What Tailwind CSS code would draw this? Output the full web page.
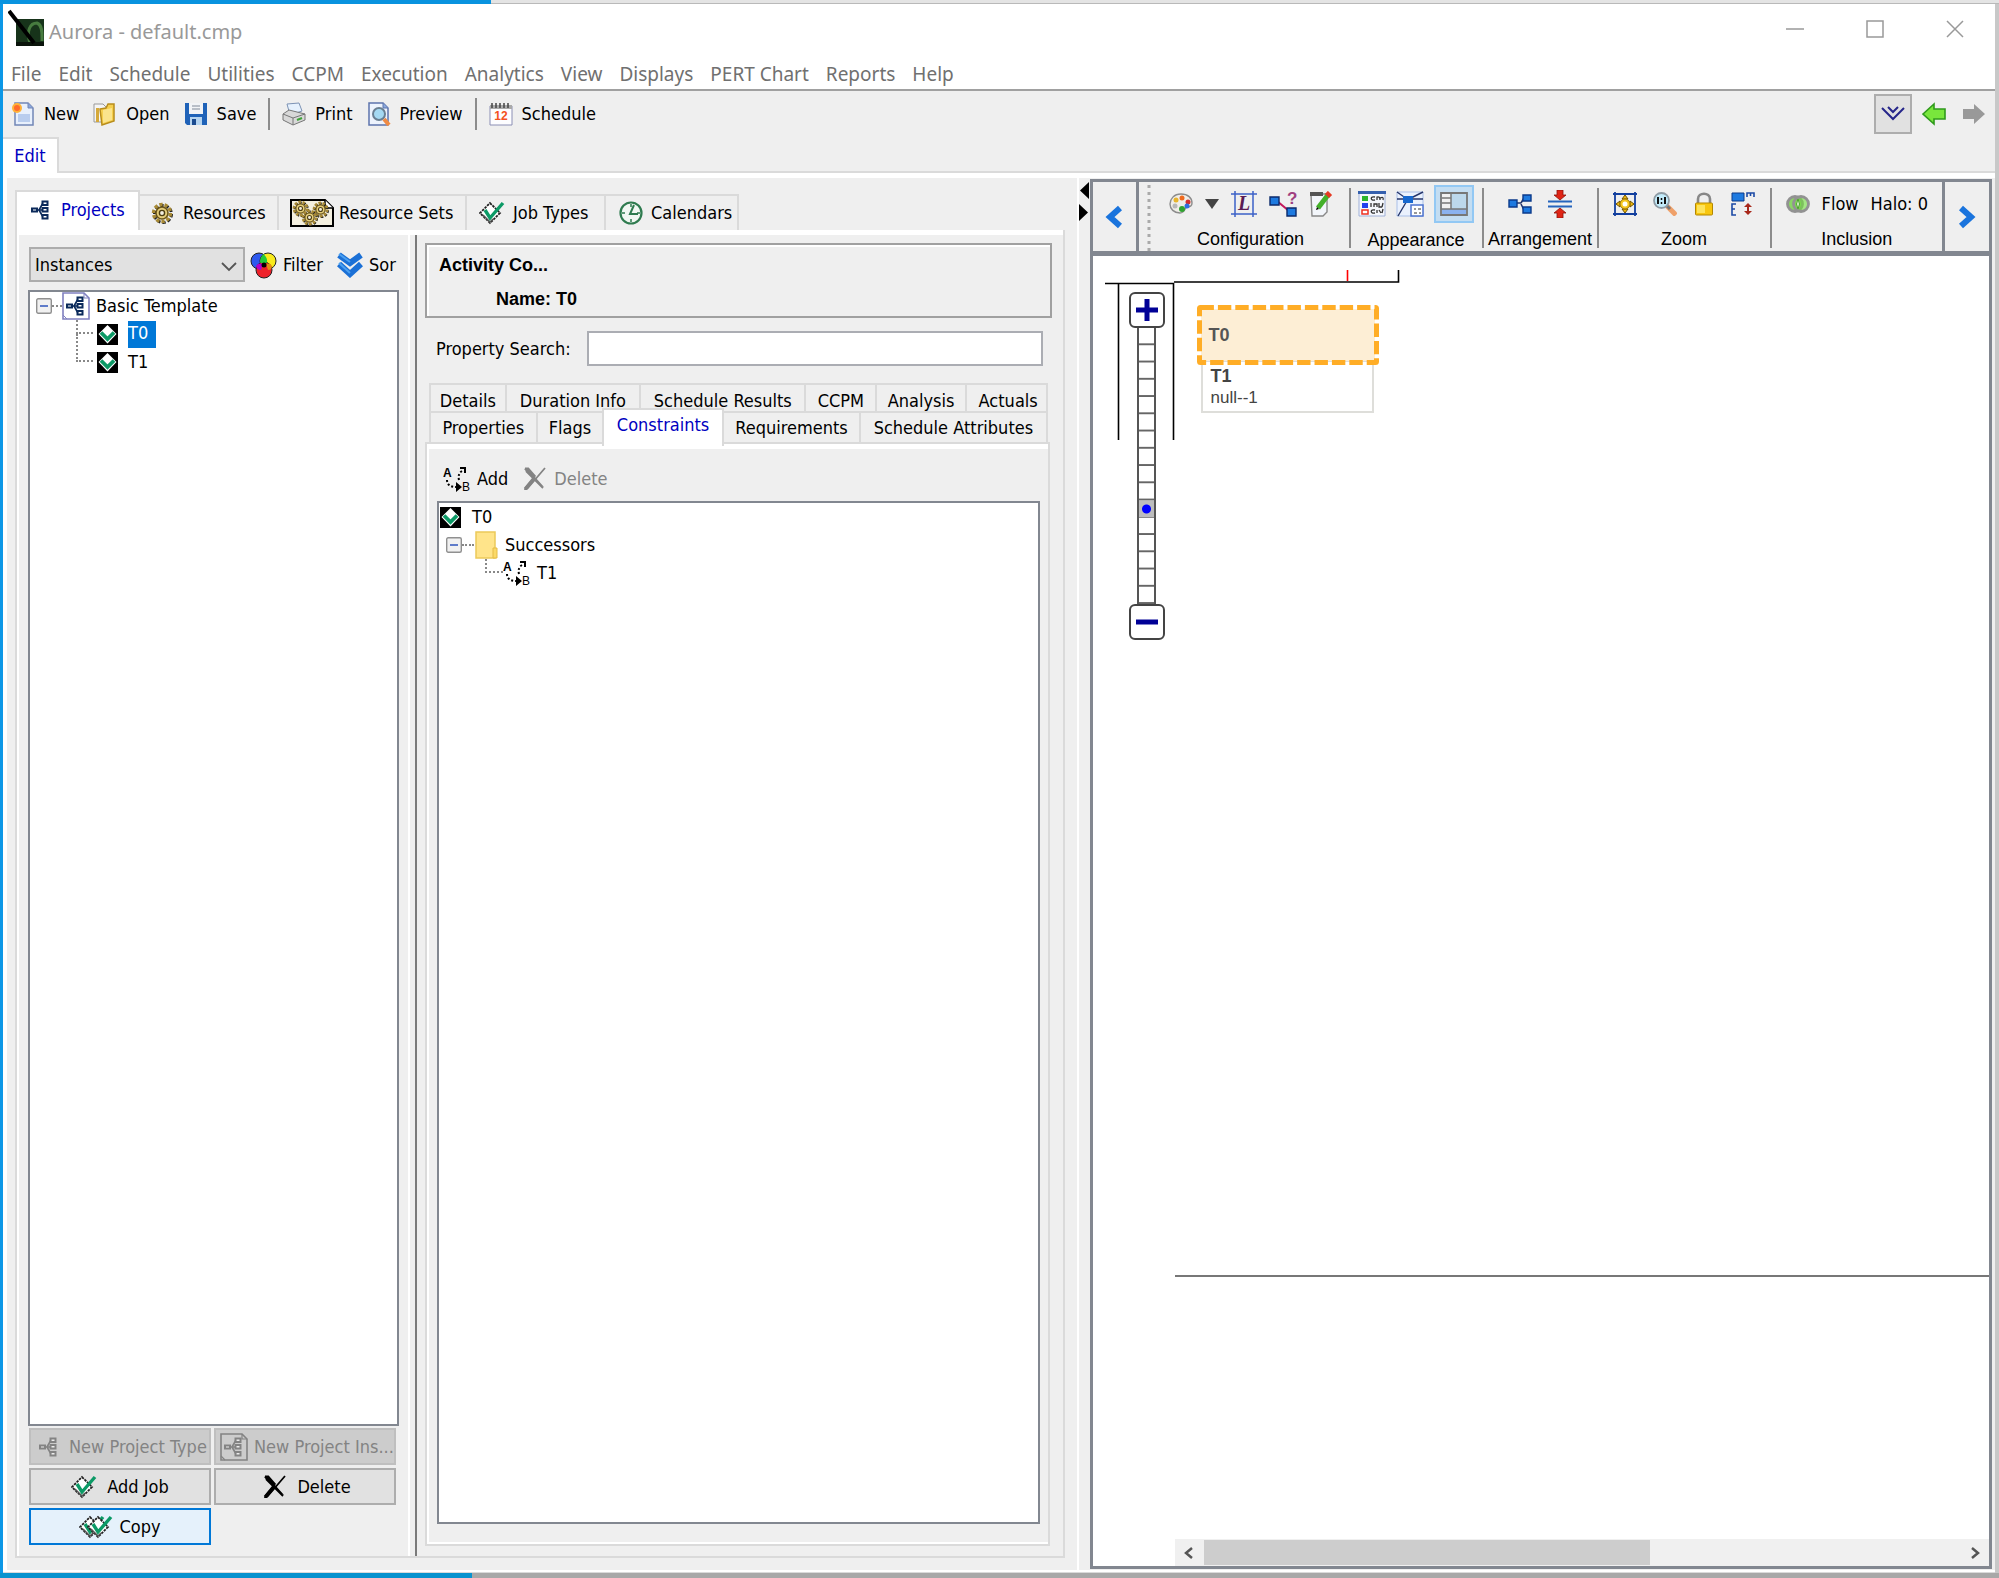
<!DOCTYPE html>
<html lang="en">
<head>
  <meta charset="UTF-8" />
  <meta name="viewport" content="width=device-width, initial-scale=1.0" />
  <title>Aurora - default.cmp</title>
  <script src="https://cdn.jsdelivr.net/npm/@tailwindcss/browser@4"></script>
</head>
<body class="min-h-screen flex flex-col bg-[#c4c4c4] text-black text-[18px] leading-6 font-['DejaVu_Sans_Condensed','DejaVu_Sans',sans-serif]">

  <!-- shared icons -->
  <svg class="hidden">
    <symbol id="i-tree" viewBox="0 0 18 20">
      <path d="M5 10h3M8 10l4-7M8 10h4M8 10l4 7" fill="none" stroke="currentColor" stroke-width="1.6"/>
      <g fill="#fff" fill-opacity=".6" stroke="currentColor" stroke-width="2"><rect x="1" y="8.500" width="5" height="3"/><rect x="11.500" y="1.500" width="5" height="3.500"/><rect x="11.500" y="8" width="5" height="3.500"/><rect x="11.500" y="15" width="5" height="3.500"/></g>
    </symbol>
    <symbol id="i-treedoc" viewBox="0 0 28 28">
      <path d="M1 1h21l5 5v21H1z" fill="none" stroke="currentColor" stroke-width="1.6"/><path d="M22 1v5h5M1 23l4 4" fill="none" stroke="currentColor" stroke-width="1.2"/>
      <use href="#i-tree" x="4" y="4" width="18" height="20"/>
    </symbol>
    <symbol id="i-gear" viewBox="0 0 22 22">
      <circle cx="12" cy="12" r="8.500" fill="none" stroke="#222" stroke-width="3" stroke-dasharray="3.300 2"/>
      <circle cx="11" cy="11" r="8.500" fill="none" stroke="#a88a34" stroke-width="3.400" stroke-dasharray="3.300 2"/>
      <circle cx="11" cy="11" r="6" fill="#e3cd7a" stroke="#6b5518" stroke-width="1.600"/><circle cx="11" cy="11" r="2.600" fill="#f3efe0" stroke="#4d3d12" stroke-width="1.400"/>
    </symbol>
    <symbol id="i-check" viewBox="0 0 26 24">
      <path d="M11 2l10 10-10 10L1 12z" fill="#fff" stroke="#222" stroke-width="1.800" stroke-dasharray="2.500 1"/>
      <path d="M4 14l7 7 3-3" fill="none" stroke="#555" stroke-width="1.500"/>
      <path d="M6 9l5 8L24 2" fill="none" stroke="#0c9a66" stroke-width="3.400"/>
    </symbol>
    <symbol id="i-job" viewBox="0 0 21 21">
      <path d="M0 0h21v21H0z"/><path d="M10.500 1l9 9-9 9.500-9-9.500z" fill="#fff"/><path d="M4 8.500l6.500 6.500L17 8.500" fill="none" stroke="#0c9a66" stroke-width="3.800"/>
    </symbol>
    <symbol id="i-ab" viewBox="0 0 28 28">
      <text x="0" y="12" font-family="Liberation Sans" font-size="12" font-weight="bold">A</text><text x="19" y="26" font-family="Liberation Sans" font-size="12">B</text>
      <path d="M4 15c0 5 4 7 9 7M16 15c-1-4 0-7 3-9" fill="none" stroke="#000" stroke-width="2" stroke-dasharray="2 2"/>
      <path d="M13 17l6 5-6 5zM17 2h6v6h-2V4h-4z"/>
    </symbol>
    <symbol id="i-x" viewBox="0 0 24 24">
      <path d="M3 4l17 17M22 1L4 22" fill="none" stroke="currentColor" stroke-width="1.800"/><path d="M1 2l3-1 17 19-3-1zM2 20l9-10 2 2-9 11-3 0z" fill="currentColor"/><path d="M2 2h3l7 8M2 22l9-11" stroke="currentColor" stroke-width="3" fill="none"/>
    </symbol>
    <symbol id="i-minus" viewBox="0 0 16 16">
      <rect x=".7" y=".7" width="14.600" height="14.600" rx="1.500" fill="#f1f1f1" stroke="#909090" stroke-width="1.400"/><path d="M4 8h8" stroke="#3a5fc0" stroke-width="1.600"/>
    </symbol>
  </svg>

  <!-- strip of the desktop above the window -->
  <div class="flex h-[4px]">
    <div class="w-[491px] bg-[#0993df]"></div>
    <div class="flex-1 bg-[#e4e4e4] border-b border-[#b9b9b9]"></div>
  </div>

  <div class="flex-1 flex flex-col border-l-[3px] border-l-[#0c97e6] border-r-[4px] border-r-[#c8c8c8] bg-[#efefef]">
    <header class="bg-white border-b-2 border-[#a0a0a0] font-['Noto_Sans',sans-serif]">
      <div class="flex h-[46px] items-center">
        <svg class="w-9 h-10 ml-[5px]" viewBox="0 0 36 40">
          <rect x="8" y="12" width="28" height="27" fill="#17331a"/><path d="M22 36c-4-12 0-20 7-20 6 2 5 12 5 18" fill="none" stroke="#5c9a50" stroke-width="3" opacity=".7"/><path d="M8 35h28v4H8z" fill="#0a140b"/>
          <path d="M1 4l25 32" stroke="#000" stroke-width="4"/>
        </svg>
        <h1 class="flex-1 ml-[5px] mt-[10px] text-[20px] text-[#999]">Aurora - default.cmp</h1>
        <button class="w-20 h-full pt-1 flex items-center justify-center" aria-label="Minimize"><svg class="w-[18px] h-[18px]" viewBox="0 0 18 18"><path d="M0 9h18" stroke="#999" stroke-width="1.500"/></svg></button>
        <button class="w-20 h-full pt-1 flex items-center justify-center" aria-label="Maximize"><svg class="w-[18px] h-[18px]" viewBox="0 0 18 18"><path d="M1 1h16v16H1z" fill="none" stroke="#999" stroke-width="1.500"/></svg></button>
        <button class="w-20 h-full pt-1 flex items-center justify-center" aria-label="Close"><svg class="w-[18px] h-[18px]" viewBox="0 0 18 18"><path d="M1 1l16 16M17 1L1 17" stroke="#999" stroke-width="1.500"/></svg></button>
      </div>
      <nav class="flex h-[39px] items-center gap-[17px] pl-2 pt-2 text-[19px] text-[#707070]">
        <a href="#">File</a><a href="#">Edit</a><a href="#">Schedule</a><a href="#">Utilities</a><a href="#">CCPM</a><a href="#">Execution</a><a href="#">Analytics</a><a href="#">View</a><a href="#">Displays</a><a href="#">PERT Chart</a><a href="#">Reports</a><a href="#">Help</a>
      </nav>
    </header>

    <div class="flex h-[46px] items-center pl-2 gap-[14px]">
      <button class="flex items-center gap-[9px]">
        <svg class="w-6 h-6" viewBox="0 0 24 24"><path d="M4 1h13l5 5v17H4z" fill="#e8f0fc" stroke="#7286b6" stroke-width="1.500"/><path d="M17 1v5h5" fill="#8ba8dc" stroke="#7286b6"/><path d="M7 12h12v8H7z" fill="#b9cdee"/><circle cx="6" cy="6" r="5" fill="#ffb238"/><circle cx="6" cy="6" r="3" fill="#ff6a2a"/></svg>New</button>
      <button class="flex items-center gap-[9px]">
        <svg class="w-6 h-6" viewBox="0 0 24 24"><path d="M1 2h9l3 3v15H1z" fill="#f5f5f5" stroke="#999"/><path d="M3 6h3v14H3z" fill="#d5a93a"/><path d="M7 7l6-1 2-4h6v17L9 23z" fill="#f6cf4e" stroke="#b88d1c" stroke-width="1.500"/><path d="M10 8l9-2v12l-9 3z" fill="#fbe48c"/></svg>Open</button>
      <button class="flex items-center gap-[9px]">
        <svg class="w-6 h-6" viewBox="0 0 24 24"><path d="M1 1h22v22H3l-2-2z" fill="#1f62b8"/><path d="M5 1h14v11H5z" fill="#f1f3f6"/><path d="M8 4h8M8 7h8" stroke="#a5adb8" stroke-width="1.500"/><path d="M6 15h12v8H6z" fill="#b5d4f0"/><path d="M8 17h4v6H8z" fill="#1b4b90"/></svg>Save</button>
      <div class="w-[2px] h-8 -mx-[2px] bg-[#8c8c8c]"></div>
      <button class="flex items-center gap-[9px]">
        <svg class="w-6 h-6" viewBox="0 0 24 24"><path d="M5 2l12-1 3 8-12 4z" fill="#e6f1fd" stroke="#7d93b5"/><path d="M1 12l6-4 16 4v6l-12 5L1 18z" fill="#d8d8d8" stroke="#777"/><path d="M1 12l10 4 12-4M11 16v7" fill="none" stroke="#777"/><path d="M15 18l5-2" stroke="#3fa33a" stroke-width="2"/></svg>Print</button>
      <button class="flex items-center gap-[9px]">
        <svg class="w-6 h-6" viewBox="0 0 24 24"><path d="M2 1h14l5 5v17H2z" fill="#edf3fd" stroke="#5d74ad" stroke-width="1.500"/><path d="M16 1v5h5" fill="#8ba8dc" stroke="#5d74ad"/><circle cx="12" cy="12" r="6" fill="#a5d9f2" stroke="#6a7f92" stroke-width="2"/><path d="M17 17l5 6" stroke="#ef8b45" stroke-width="4"/></svg>Preview</button>
      <div class="w-[2px] h-8 -mx-[2px] bg-[#8c8c8c]"></div>
      <button class="flex items-center gap-[9px]">
        <svg class="w-6 h-6" viewBox="0 0 24 24"><path d="M1 4h22v19H1z" fill="#fdfdff" stroke="#8b8fb5"/><path d="M1 3h22v4H1z" fill="#aaa"/><path d="M3 1v5M7 1v5M11 1v5M15 1v5M19 1v5" stroke="#444" stroke-width="1.500"/><text x="12" y="18" text-anchor="middle" font-family="Liberation Sans" font-size="12" font-weight="bold" fill="#f4511e">12</text></svg>Schedule</button>
      <div class="ml-auto flex items-center pr-[9px]">
        <button class="w-[38px] h-10 mr-[10px] flex items-center justify-center border-2 border-[#adadad] bg-[#e1e1e1]" aria-label="Collapse"><svg class="w-6 h-4" viewBox="0 0 24 16"><path d="M1 2l11 11L23 2M7 1l5 5 5-5" fill="none" stroke="#26268a" stroke-width="2"/></svg></button>
        <button class="mr-4" aria-label="Back"><svg class="w-6 h-6" viewBox="0 0 24 24"><path d="M1 12L12 2v5h11v10H12v5z" fill="#79e63c" stroke="#2f9a1c" stroke-width="1.600"/></svg></button>
        <button aria-label="Forward"><svg class="w-6 h-6" viewBox="0 0 24 24"><path d="M23 12L12 2v5H1v10h11v5z" fill="#999"/></svg></button>
      </div>
    </div>

    <div class="flex h-[36px]">
      <button class="w-[56px] bg-white border-t-2 border-r-2 border-[#dadada] text-[#0000c0]">Edit</button>
      <div class="flex-1 border-b-2 border-[#dadada]"></div>
    </div>
    <div class="h-[5px] bg-white"></div>

    <main class="flex-1 flex border-l-4 border-white">
      <!-- project side -->
      <section class="w-[53.9%] flex flex-col pl-2 pr-3 pt-3 pb-3 border-r-2 border-white">
        <div class="flex items-end">
          <button class="flex items-center gap-3 w-[125px] h-[40px] pl-[14px] pb-[2px] bg-white border-2 border-b-0 border-[#dadada] text-[#0000c0]"><svg class="w-[18px] h-5 text-[#0b2a5b]"><use href="#i-tree"/></svg>Projects</button>
          <button class="flex items-center gap-[10px] w-[139px] h-[36px] pl-[11px] border-t-2 border-r-2 border-[#dadada]"><svg class="w-[22px] h-[22px]"><use href="#i-gear"/></svg>Resources</button>
          <button class="flex items-center gap-[5px] w-[188px] h-[36px] pl-[11px] border-t-2 border-r-2 border-[#dadada] whitespace-nowrap"><svg class="w-[44px] h-7 shrink-0" viewBox="0 0 44 28"><path d="M1 1h34l8 8v18H1z" fill="#f4f0e0" stroke="#000" stroke-width="2"/><path d="M35 1v8h8" fill="#fff" stroke="#000" stroke-width="1.500"/><use href="#i-gear" x="2" y="1" width="17" height="17"/><use href="#i-gear" x="22" y="2" width="17" height="17"/><use href="#i-gear" x="11" y="10" width="17" height="17"/></svg>Resource Sets</button>
          <button class="flex items-center gap-2 w-[139px] h-[36px] pl-3 border-t-2 border-r-2 border-[#dadada] whitespace-nowrap"><svg class="w-[26px] h-6 shrink-0"><use href="#i-check"/></svg>Job Types</button>
          <button class="flex items-center gap-2 w-[133px] h-[36px] pl-[13px] border-t-2 border-r-2 border-[#dadada]"><svg class="w-6 h-6 shrink-0" viewBox="0 0 24 24"><circle cx="12" cy="12" r="10.500" fill="#f1f7f2" stroke="#2f7b4f" stroke-width="2.200"/><path d="M12 3v3M12 18v3M3 12h3M18 12h3" stroke="#2f7b4f" stroke-width="1.500"/><path d="M15 4l-4 9h8" fill="none" stroke="#2f7b4f" stroke-width="2"/></svg>Calendars</button>
        </div>

        <div class="flex-1 flex border-2 border-[#dadada] border-t-0">
          <div class="flex-1 flex border-t-[5px] border-l-2 border-white">
            <!-- tree column -->
            <div class="w-[391px] shrink-0 flex flex-col pl-[9px] pr-[9px] pt-3 pb-[11px] border-r-2 border-white">
              <div class="flex items-center mb-2 pl-[1px]">
                <div class="relative w-[216px] shrink-0">
                  <select class="w-full h-[35px] appearance-none pl-1 border-2 border-[#adadad] bg-[#e1e1e1]" aria-label="Show"><option>Instances</option></select>
                  <svg class="absolute right-2 top-[14px] w-4 h-3 pointer-events-none" viewBox="0 0 16 12"><path d="M1 2l7 7 7-7" fill="none" stroke="#555" stroke-width="1.800"/></svg>
                </div>
                <button class="flex items-center gap-[5px] ml-[5px] shrink-0">
                  <svg class="w-7 h-7" viewBox="0 0 28 28"><g stroke="#222" stroke-width="1"><circle cx="9" cy="10" r="8" fill="#2e59ee"/><circle cx="18" cy="10" r="8" fill="#f8ea1c"/><circle cx="14" cy="19" r="8" fill="#ee2129"/></g><path d="M13.500 3c4 4 4 7 3 9h-6c-1-3 0-6 3-9z" fill="#22c93a"/><path d="M6 15c2-3 5-3 7-2l-2 6c-3 0-5-2-5-4z" fill="#b400c8"/><path d="M22 15c-2-3-4-3-6-2l2 6c3 0 4-2 4-4z" fill="#e68a12"/><circle cx="14" cy="14" r="2.500"/></svg>Filter</button>
                <button class="flex items-center gap-[6px] ml-[14px] shrink-0">
                  <svg class="w-[26px] h-[26px]" viewBox="0 0 26 26"><path d="M2 3l11 8 11-8M2 12l11 10 11-10" fill="none" stroke="#1b70d6" stroke-width="6"/><path d="M2 2l11 8M2 11l11 10" fill="none" stroke="#4ba0f0" stroke-width="2"/></svg>Sor</button>
              </div>
              <div class="flex-1 bg-white border-2 border-[#828790]">
                <div class="flex items-center h-7 pl-[6px]">
                  <svg class="w-4 h-4"><use href="#i-minus"/></svg>
                  <div class="w-[10px] border-t-2 border-dotted border-[#888]"></div>
                  <svg class="w-7 h-7 text-[#8080c0]" viewBox="0 0 28 28"><path d="M1 1h21l5 5v21H1z" fill="#fff" stroke="currentColor" stroke-width="1.600"/><path d="M22 1v5h5M1 23l4 4" fill="none" stroke="currentColor"/><use class="text-[#0b2a5b]" href="#i-tree" x="4" y="4" width="18" height="20"/></svg>
                  <span class="ml-[6px]">Basic Template</span>
                </div>
                <div class="ml-[46px] w-[17px] h-[14px] border-l-2 border-b-2 border-dotted border-[#888] float-left"></div>
                <div class="flex items-center h-7 pl-1">
                  <svg class="w-[21px] h-[21px]"><use href="#i-job"/></svg><span class="ml-[10px] h-[27px] w-[28px] bg-[#0078d7] text-white">T0</span>
                </div>
                <div class="ml-[46px] w-[17px] h-7 -mt-[14px] border-l-2 border-b-2 border-dotted border-[#888] float-left"></div>
                <div class="flex items-center h-7 pl-1">
                  <svg class="w-[21px] h-[21px]"><use href="#i-job"/></svg><span class="ml-[10px]">T1</span>
                </div>
              </div>
              <div class="grid grid-cols-2 gap-[3px] mt-[2px] ml-[1px] mr-[3px]">
                <button disabled class="flex items-center gap-3 h-[37px] pl-2 border-2 border-[#bfbfbf] bg-[#cccccc] text-[#838383] whitespace-nowrap"><svg class="w-[18px] h-5 shrink-0"><use href="#i-tree"/></svg>New Project Type</button>
                <button disabled class="flex items-center gap-[6px] h-[37px] pl-1 border-2 border-[#bfbfbf] bg-[#cccccc] text-[#838383] whitespace-nowrap"><svg class="w-7 h-7 shrink-0"><use href="#i-treedoc"/></svg>New Project Ins...</button>
                <button class="flex items-center justify-center gap-[10px] h-[37px] border-2 border-[#adadad] bg-[#e1e1e1]"><svg class="w-[26px] h-6"><use href="#i-check"/></svg>Add Job</button>
                <button class="flex items-center justify-center gap-[10px] h-[37px] pl-1 border-2 border-[#adadad] bg-[#e1e1e1]"><svg class="w-6 h-6"><use href="#i-x"/></svg>Delete</button>
                <button class="flex items-center justify-center gap-[6px] h-[37px] border-2 border-[#0078d7] bg-[#e5f1fb]"><svg class="w-[34px] h-6" viewBox="0 0 34 24"><use href="#i-check" width="26" height="24"/><use href="#i-check" x="8" width="26" height="24"/></svg>Copy</button>
              </div>
            </div>

            <div class="w-[7px] border-r-2 border-[#7a7a7a]"></div>

            <!-- property column -->
            <div class="flex-1 flex flex-col pl-2 pr-[11px] pt-2 pb-[10px]">
              <div class="h-[75px] border-2 border-[#a0a0a0] shadow-[inset_1px_1px_0_1px_#fff] pl-3 pt-[7px] font-['Liberation_Sans',sans-serif] font-bold leading-[34px]">
                <div class="-mt-1">Activity Co...</div>
                <div class="pl-[57px]">Name: T0</div>
              </div>
              <div class="flex items-center gap-4 mt-[13px] pl-[11px] pr-[9px]">
                <label for="search" class="whitespace-nowrap">Property Search:</label>
                <input id="search" type="text" class="flex-1 min-w-0 h-[35px] px-1 bg-white border-2 border-[#abadb3]" />
              </div>

              <div class="mt-[17px] ml-1 mr-[4px] grid grid-cols-[76fr_135fr_166fr_71fr_90fr_81fr] h-7 border-t-2 border-l-2 border-[#dadada] whitespace-nowrap">
                <button class="pt-1 border-r-2 border-[#dadada]">Details</button><button class="pt-1 border-r-2 border-[#dadada]">Duration Info</button><button class="pt-1 border-r-2 border-[#dadada]">Schedule Results</button><button class="pt-1 border-r-2 border-[#dadada]">CCPM</button><button class="pt-1 border-r-2 border-[#dadada]">Analysis</button><button class="pt-1 pl-1 border-r-2 border-[#dadada]">Actuals</button>
              </div>
              <div class="ml-1 mr-[4px] grid grid-cols-[107fr_65fr_122fr_138fr_187fr] h-[31px] border-l-2 border-[#dadada] whitespace-nowrap">
                <button class="border-t-2 border-r-2 border-[#dadada]">Properties</button><button class="border-t-2 border-[#dadada]">Flags</button><button class="relative -mt-[3px] -mb-1 pb-[6px] bg-white border-2 border-b-0 border-[#dadada] text-[#0000c0]">Constraints</button><button class="border-t-2 border-r-2 border-[#dadada]">Requirements</button><button class="border-t-2 border-r-2 border-[#dadada]">Schedule Attributes</button>
              </div>

              <div class="flex-1 flex flex-col border-2 border-[#dadada] mr-[2px]">
                <div class="flex-1 flex flex-col border-t-[5px] border-l-2 border-b-2 border-white px-2 pb-[18px]">
                  <div class="flex items-center h-[52px] pt-2 pl-[6px]">
                    <button class="flex items-center gap-[6px]"><svg class="w-7 h-7"><use href="#i-ab"/></svg>Add</button>
                    <button disabled class="flex items-center gap-[7px] ml-[15px] text-[#838383]"><svg class="w-6 h-6"><use href="#i-x"/></svg>Delete</button>
                  </div>
                  <div class="flex-1 bg-white border-2 border-[#828790]">
                    <div class="flex items-center h-7 pl-[1px] gap-[11px]"><svg class="w-[21px] h-[21px]"><use href="#i-job"/></svg>T0</div>
                    <div class="flex items-center h-7 pl-[7px]">
                      <svg class="w-4 h-4"><use href="#i-minus"/></svg>
                      <div class="w-[12px] border-t-2 border-dotted border-[#888]"></div>
                      <svg class="w-6 h-7" viewBox="0 0 24 28"><path d="M2 1h19v26H2z" fill="#ffe48a" stroke="#ecc95a" stroke-width="1.500"/><path d="M19 17h4v10h-4z" fill="#fbd968" stroke="#e4bb45"/></svg>
                      <span class="ml-[7px]">Successors</span>
                    </div>
                    <div class="ml-[46px] w-[18px] h-[14px] border-l-2 border-b-2 border-dotted border-[#888] float-left"></div>
                    <div class="flex items-center h-7 gap-[6px]"><svg class="w-7 h-7"><use href="#i-ab"/></svg>T1</div>
                  </div>
                </div>
              </div>
            </div>
          </div>
        </div>
      </section>

      <div class="w-[11px] pt-1">
        <svg class="w-[10px] h-10" viewBox="0 0 10 40"><path d="M10 0v17L1 8.500zM0 22v17l9-8.500z"/></svg>
      </div>

      <!-- PERT chart side -->
      <section class="flex-1 flex flex-col min-w-0 mt-[1px] mb-[1px] mr-[3px] border-[3px] border-[#828790] bg-white">
        <div class="flex h-[74px] border-b-[5px] border-[#828790] bg-[#efefef]">
          <button class="w-[46px] shrink-0 flex items-center justify-center border-r-[3px] border-[#828790]" aria-label="Scroll left"><svg class="w-5 h-6" viewBox="0 0 20 24"><path d="M16 3L6 12l10 9" fill="none" stroke="#1a74dd" stroke-width="6"/></svg></button>
          <svg class="w-[10px] h-[68px] ml-1 mt-[1px] shrink-0" viewBox="0 0 10 68"><path d="M6 2v66" stroke="#aaa" stroke-width="3" stroke-dasharray="3 4"/></svg>

          <div class="w-[196px] flex flex-col items-center mt-1">
            <div class="flex items-center justify-center gap-3 h-9">
              <button aria-label="Colors"><svg class="w-6 h-6" viewBox="0 0 24 24"><path d="M12 2c7 0 11 4 11 9 0 4-3 4-5 4s-2 6-7 6C5 21 1 17 1 12S5 2 12 2z" fill="#f0eee8" stroke="#8c8c8c" stroke-width="1.400"/><circle cx="7" cy="8" r="2.500" fill="#e7b52c"/><circle cx="13" cy="6" r="2.500" fill="#f06a1e"/><circle cx="19" cy="10" r="2.500" fill="#d32f2f"/><circle cx="6" cy="14" r="2.500" fill="#b8b8b8"/><circle cx="18" cy="14" r="2.500" fill="#2f6fe0"/><circle cx="13" cy="17" r="3" fill="#2fa32f"/></svg></button>
              <button aria-label="Color options"><svg class="w-[14px] h-3" viewBox="0 0 14 12"><path d="M0 1h14L7 11z" fill="#444"/></svg></button>
              <button aria-label="Labels"><svg class="w-[26px] h-[26px]" viewBox="0 0 26 26"><path d="M4 0v26M22 0v26M0 3h26M0 23h26" stroke="#3c62c8" stroke-width="1.500"/><text x="13" y="19" text-anchor="middle" font-family="Liberation Serif" font-style="italic" font-weight="bold" font-size="20" fill="#5b1b52">L</text></svg></button>
              <button aria-label="Link query"><svg class="w-7 h-[26px] overflow-visible" viewBox="0 0 28 26"><path d="M8 10l12 10" stroke="#c2185b" stroke-width="2"/><path d="M1 6h9v8H1zM18 17h9v8h-9z" fill="#1e7ae0" stroke="#0b2a6b" stroke-width="1.400"/><text x="18" y="13" font-family="Liberation Sans" font-weight="bold" font-size="17" fill="#a04080">?</text></svg></button>
              <button aria-label="Edit notes"><svg class="w-6 h-[26px]" viewBox="0 0 24 26"><path d="M2 3h16v18l-4 4H3z" fill="#f3f6fb" stroke="#888" stroke-width="1.400"/><path d="M1 1h13v4H1z" fill="#555"/><path d="M9 17L19 4" stroke="#43b02a" stroke-width="5"/><path d="M18 5l3-3" stroke="#e53922" stroke-width="6"/><path d="M7 19l3-1-2-2z"/></svg></button>
            </div>
            <span class="mt-[6px] font-['Liberation_Sans',sans-serif]">Configuration</span>
          </div>
          <div class="w-[2px] h-[60px] mt-[6px] bg-[#8c8c8c]"></div>

          <div class="w-[131px] flex flex-col items-center mt-1">
            <div class="flex items-center justify-center gap-[10px] h-9">
              <button aria-label="Legend"><svg class="w-7 h-[26px]" viewBox="0 0 28 26"><path d="M1 1h26v24H1z" fill="#f5f7fc" stroke="#9fb0d8"/><path d="M0 0h28v3H0z" fill="#3560ae"/><path d="M4 5h6v5H4z" fill="#2db52d"/><path d="M4 12h6v5H4z" fill="#2340ee"/><path d="M4 19h6v4H4z" fill="#fff" stroke="#ee3020" stroke-width="1.500"/><path d="M17 6c-5-1-5 4 0 3M19 9V6q3-1 3 3V7q4-2 3 2M13 12v4M16 16v-3h3v3M21 12v4h3M25 12l-1 4M17 19c-5-1-5 4 0 3M19 22v-3M21 19l2 3M25 18l-1 4" fill="none" stroke="#333" stroke-width="1.300"/></svg></button>
              <button aria-label="Overview"><svg class="w-7 h-[26px]" viewBox="0 0 28 26"><path d="M1 1h26v24H1z" fill="#eaf1fd" stroke="#a9bfe8"/><path d="M1 1l10 7M27 1l-14 7M12 8L2 25M1 8h26" stroke="#26366b" stroke-width="1.400" fill="none"/><path d="M7 5h10v7H7z" fill="#1768cf"/><path d="M15 14h12v11H15z" fill="#fff" stroke="#4d74cf" stroke-width="1.500"/><path d="M18 18h2M22 18h3M18 22h3M23 22h2" stroke="#777" stroke-width="1.500"/></svg></button>
              <button class="w-10 h-[38px] flex items-center justify-center border-2 border-[#92c8f4] bg-[#c3ddf2]" aria-label="Show details"><svg class="w-7 h-6" viewBox="0 0 28 24"><path d="M1 1h26v22H1z" fill="#bcd8ec" stroke="#777" stroke-width="1.800"/><path d="M2 2h9v15H2z" fill="#f1f1f1"/><path d="M2 17h24v5H2z" fill="#8bb2ef"/><path d="M11 1v16M1 17h26M2 6h9M2 11h9" stroke="#777" stroke-width="1.500"/></svg></button>
            </div>
            <span class="mt-[6px] font-['Liberation_Sans',sans-serif]">Appearance</span>
          </div>
          <div class="w-[2px] h-[60px] mt-[6px] bg-[#8c8c8c]"></div>

          <div class="w-[113px] flex flex-col items-center mt-1">
            <div class="flex items-center justify-center gap-4 h-9">
              <button aria-label="Layout"><svg class="w-6 h-5" viewBox="0 0 24 20"><path d="M8 9h5M13 9l3-5M13 10l3 6" stroke="#26366b" stroke-width="1.600"/><path d="M1 6h8v7H1zM15 1h8v6h-8zM15 13h8v6h-8z" fill="#1e7ae0" stroke="#0b3a8b" stroke-width="1.400"/></svg></button>
              <button aria-label="Compress"><svg class="w-6 h-7" viewBox="0 0 24 28"><path d="M0 11.500h24M0 16.500h24" stroke="#2464bd" stroke-width="2"/><path d="M12 10L6 5h3V0h6v5h3zM12 18l-6 5h3v5h6v-5h3z" fill="#e02414" stroke="#8a130a" stroke-width=".8"/></svg></button>
            </div>
            <span class="mt-[6px] font-['Liberation_Sans',sans-serif]">Arrangement</span>
          </div>
          <div class="w-[2px] h-[60px] mt-[6px] bg-[#8c8c8c]"></div>

          <div class="w-[171px] flex flex-col items-center mt-1">
            <div class="flex items-center justify-center gap-4 h-9">
              <button aria-label="Fit"><svg class="w-6 h-6" viewBox="0 0 24 24"><path d="M2 0v24M22 0v24M0 2h24M0 22h24" stroke="#123f9e" stroke-width="1.800"/><path d="M12 3l3 4H9zM12 21l3-4H9zM3 12l4-3v6zM21 12l-4-3v6z" fill="#f3bb0a" stroke="#6e5200"/><circle cx="12" cy="12" r="5" fill="#f7c81f" stroke="#987307"/><circle cx="12" cy="12" r="2.500" fill="#fff"/></svg></button>
              <button aria-label="Zoom 1:1"><svg class="w-6 h-6" viewBox="0 0 24 24"><path d="M14 14l9 9" stroke="#efa069" stroke-width="5"/><path d="M14 14l3 3" stroke="#777" stroke-width="3"/><circle cx="8.500" cy="8.500" r="7.500" fill="#c2ecfb" stroke="#8f9ca5" stroke-width="1.800"/><path d="M5 5v7M12 5v7" stroke="#111" stroke-width="2"/><path d="M8.500 6v2M8.500 10v2" stroke="#111" stroke-width="1.500"/></svg></button>
              <button aria-label="Lock"><svg class="w-[22px] h-6" viewBox="0 0 22 24"><path d="M5 12V7c0-7 12-7 12 0v5" fill="none" stroke="#888" stroke-width="2.600"/><rect x="2.500" y="11" width="17" height="12" rx="1" fill="#f8c60e" stroke="#b38700"/><path d="M4 13h8v8H4z" fill="#fde35c"/></svg></button>
              <button aria-label="Scale"><svg class="w-6 h-6" viewBox="0 0 24 24"><path d="M1 1h12v8H1z" fill="#1e7ae0" stroke="#0b3a8b"/><path d="M16 5V1h7v4M19.500 1v3M5 12H1v11h4M1 17h3" fill="none" stroke="#1c4aa5" stroke-width="1.600"/><path d="M17 11l4 4h-3v4h3l-4 4-4-4h3v-4h-3z" fill="#a8281a"/></svg></button>
            </div>
            <span class="mt-[6px] font-['Liberation_Sans',sans-serif]">Zoom</span>
          </div>
          <div class="w-[2px] h-[60px] mt-[6px] bg-[#8c8c8c]"></div>

          <div class="flex-1 flex flex-col items-center mt-1">
            <div class="flex items-center justify-center gap-3 h-9 whitespace-nowrap">
              <button aria-label="Inclusion"><svg class="w-6 h-[18px]" viewBox="0 0 24 18"><circle cx="9" cy="9" r="7.500" fill="#8ad664" stroke="#929292" stroke-width="2.800"/><circle cx="15" cy="9" r="7.500" fill="#6fe03a" fill-opacity=".6" stroke="#929292" stroke-width="2.800"/><path d="M12 4q3 5 0 10q-3-5 0-10" fill="#dff5d2" stroke="#4e9e2e"/></svg></button>
              <button>Flow</button>
              <button>Halo: 0</button>
            </div>
            <span class="mt-[6px] font-['Liberation_Sans',sans-serif]">Inclusion</span>
          </div>
          <button class="w-[47px] shrink-0 flex items-center justify-center border-l-[3px] border-[#828790]" aria-label="Scroll right"><svg class="w-5 h-6" viewBox="0 0 20 24"><path d="M4 3l10 9-10 9" fill="none" stroke="#1a74dd" stroke-width="6"/></svg></button>
        </div>

        <!-- drawing area -->
        <div class="flex-1 relative">
          <svg class="absolute left-3 top-3 w-[300px] h-[180px]" viewBox="0 0 300 180">
            <path d="M0 15.500h69M13.500 16v156M68.500 15v157M69 14h224.500V2" fill="none" stroke="#000" stroke-width="1.600"/>
            <path d="M242.500 2v11" stroke="#f00" stroke-width="1.600"/>
          </svg>
          <div class="absolute left-9 top-[36px] flex flex-col items-center">
            <button class="w-9 h-9 flex items-center justify-center rounded-[6px] border-2 border-[#444] bg-white" aria-label="Zoom in"><svg class="w-6 h-6" viewBox="0 0 24 24"><path d="M12 1v22M1 12h22" stroke="#000096" stroke-width="5"/></svg></button>
            <div class="w-[19px] h-[276px] border-x-2 border-[#555] bg-[linear-gradient(to_top,#666_0_2px,transparent_2px)] bg-[length:100%_6.25%]">
              <input type="range" min="0" max="15" value="5" aria-label="Zoom" class="block w-[15px] h-full appearance-none bg-transparent [writing-mode:vertical-lr] [direction:rtl] [&::-webkit-slider-thumb]:appearance-none [&::-webkit-slider-thumb]:w-[15px] [&::-webkit-slider-thumb]:h-[16px] [&::-webkit-slider-thumb]:bg-[radial-gradient(circle,#00f_0_4px,#bdbdbd_5px)]" />
            </div>
            <button class="w-9 h-9 flex items-center justify-center rounded-[6px] border-2 border-[#444] bg-white" aria-label="Zoom out"><svg class="w-6 h-6" viewBox="0 0 24 24"><path d="M1 12h22" stroke="#000096" stroke-width="5"/></svg></button>
          </div>

          <div class="absolute left-[108px] top-[104px] w-[173px] h-[53px] pl-2 pt-[3px] border-2 border-[#dededa] bg-white font-['Liberation_Sans',sans-serif] text-[#444] leading-[22px]">
            <div class="font-bold text-[18px]">T1</div>
            <div class="text-[17px]">null--1</div>
          </div>
          <div class="absolute left-[104px] top-[49px] w-[182px] h-[60px]">
            <div class="absolute inset-1 pl-2 flex items-center bg-[#fdeed5] font-['Liberation_Sans',sans-serif] font-bold text-[18px] text-[#555]">T0</div>
            <svg class="absolute w-full h-full" viewBox="0 0 182 60"><rect x="2.500" y="2.500" width="177" height="55" rx="1" fill="none" stroke="#ffad26" stroke-width="5" stroke-dasharray="13.400 4"/></svg>
          </div>
          <div class="absolute left-[82px] right-0 bottom-[262px] h-[2px] bg-[#777]"></div>
        </div>

        <div class="flex items-center h-[27px] ml-[82px] bg-[#f0f0f0]">
          <button class="w-[29px] flex justify-center" aria-label="Left"><svg class="w-3 h-3" viewBox="0 0 12 12"><path d="M9 1L3 6l6 5" fill="none" stroke="#555" stroke-width="2.500"/></svg></button>
          <div class="flex-1 h-[25px]"><div class="w-[59%] h-full bg-[#cdcdcd]"></div></div>
          <button class="w-[29px] flex justify-center" aria-label="Right"><svg class="w-3 h-3" viewBox="0 0 12 12"><path d="M3 1l6 5-6 5" fill="none" stroke="#555" stroke-width="2.500"/></svg></button>
        </div>
      </section>
    </main>
    <div class="h-[3px] bg-white border-b border-[#dadada]"></div>
  </div>

  <!-- strip of the desktop below the window -->
  <div class="flex h-[5px]">
    <div class="w-[472px] bg-[#0993cf]"></div>
    <div class="flex-1 bg-[#a8a8a8]"></div>
  </div>
</body>
</html>
